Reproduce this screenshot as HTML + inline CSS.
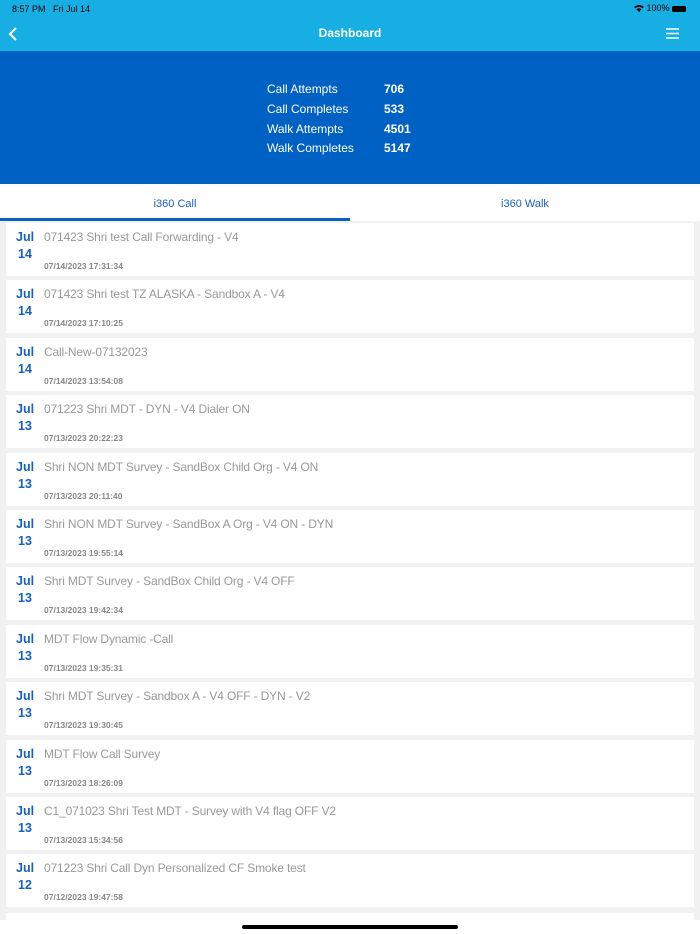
<!DOCTYPE html>
<html style="width:700px;height:934px;overflow:hidden"><head><style>
body{margin:0;width:700px;height:934px;overflow:hidden;background:#f1f1f1;font-family:"Liberation Sans",sans-serif;position:relative}
.a{position:absolute}
.top{left:0;top:0;width:700px;height:51px;background:#17afe3;color:#fff}
.stats{left:0;top:51px;width:700px;height:133px;background:#0061c4;color:#fff;font-size:12px}
.tabs{left:0;top:184px;width:700px;height:37px;background:#fff;font-size:11px;color:#1a5fc0}
.card{left:6px;width:688px;height:53px;background:#fff}
.m{position:absolute;left:10px;top:6px;font-weight:bold;color:#1660c4;font-size:12.5px;line-height:17px;text-align:center;width:18px}
.t{position:absolute;left:38px;top:7px;color:#999;font-size:12px;letter-spacing:-0.15px}
.d{position:absolute;left:38px;top:38px;color:#888;font-size:8.5px;font-weight:bold}
</style></head><body>
<div class="a top">
<div class="a" style="left:12px;top:4px;font-size:9px;color:#000">8:57 PM&nbsp;&nbsp; Fri Jul 14</div>
<div class="a" style="left:634px;top:3px;font-size:9px;color:#000">
<svg width="10" height="8" viewBox="0 0 10 8" style="vertical-align:-1px"><path d="M0 3 Q5-1 10 3 L8.7 4.3 Q5 1.5 1.3 4.3Z M2.5 5.2 Q5 3.3 7.5 5.2 L5 8Z" fill="#000"/></svg> 100%
<span style="display:inline-block;width:14px;height:6px;background:#000;border-radius:1.5px;vertical-align:-1px"></span></div>
<svg class="a" style="left:8px;top:27px" width="10" height="14"><path d="M8 1 L2 7 L8 13" stroke="#fff" stroke-width="2" fill="none"/></svg>
<div class="a" style="left:0;width:700px;top:26px;text-align:center;font-weight:bold;font-size:12px">Dashboard</div>
<svg class="a" style="left:666px;top:28px" width="13" height="11"><path d="M0 1H13M0 5.5H13M0 10H13" stroke="#fff" stroke-width="1.5"/></svg>
</div>
<div class="a stats">
<div class="a" style="left:267px;top:29px;line-height:19.8px">Call Attempts<br>Call Completes<br>Walk Attempts<br>Walk Completes</div>
<div class="a" style="left:384px;top:29px;line-height:19.8px;font-weight:bold">706<br>533<br>4501<br>5147</div>
</div>
<div class="a tabs">
<div class="a" style="left:0;width:350px;top:14px;text-align:center">i360 Call</div>
<div class="a" style="left:350px;width:350px;top:14px;text-align:center">i360 Walk</div>
<div class="a" style="left:0;top:34px;width:350px;height:3px;background:#0b5fc4"></div>
</div>
<div id="l"></div>
<div class="a card" style="top:913px"></div>
<div class="a" style="left:0;top:920px;width:700px;height:14px;background:#fff"></div>
<div class="a" style="left:242px;top:925px;width:216px;height:4px;background:#000;border-radius:2px"></div>
<script>
var r=[["14","071423 Shri test Call Forwarding - V4","07/14/2023 17:31:34"],["14","071423 Shri test TZ ALASKA - Sandbox A - V4","07/14/2023 17:10:25"],["14","Call-New-07132023","07/14/2023 13:54:08"],["13","071223 Shri MDT - DYN - V4 Dialer ON","07/13/2023 20:22:23"],["13","Shri NON MDT Survey - SandBox Child Org - V4 ON","07/13/2023 20:11:40"],["13","Shri NON MDT Survey - SandBox A Org - V4 ON - DYN","07/13/2023 19:55:14"],["13","Shri MDT Survey - SandBox Child Org - V4 OFF","07/13/2023 19:42:34"],["13","MDT Flow Dynamic -Call","07/13/2023 19:35:31"],["13","Shri MDT Survey - Sandbox A - V4 OFF - DYN - V2","07/13/2023 19:30:45"],["13","MDT Flow Call Survey","07/13/2023 18:26:09"],["13","C1_071023 Shri Test MDT - Survey with V4 flag OFF V2","07/13/2023 15:34:56"],["12","071223 Shri Call Dyn Personalized CF Smoke test","07/12/2023 19:47:58"]];
var h="";r.forEach(function(x,i){h+='<div class="a card" style="top:'+(223+i*57.4)+'px"><div class="m">Jul<br>'+x[0]+'</div><div class="t">'+x[1]+'</div><div class="d">'+x[2]+'</div></div>'});
document.getElementById("l").innerHTML=h;
</script>
</body></html>
